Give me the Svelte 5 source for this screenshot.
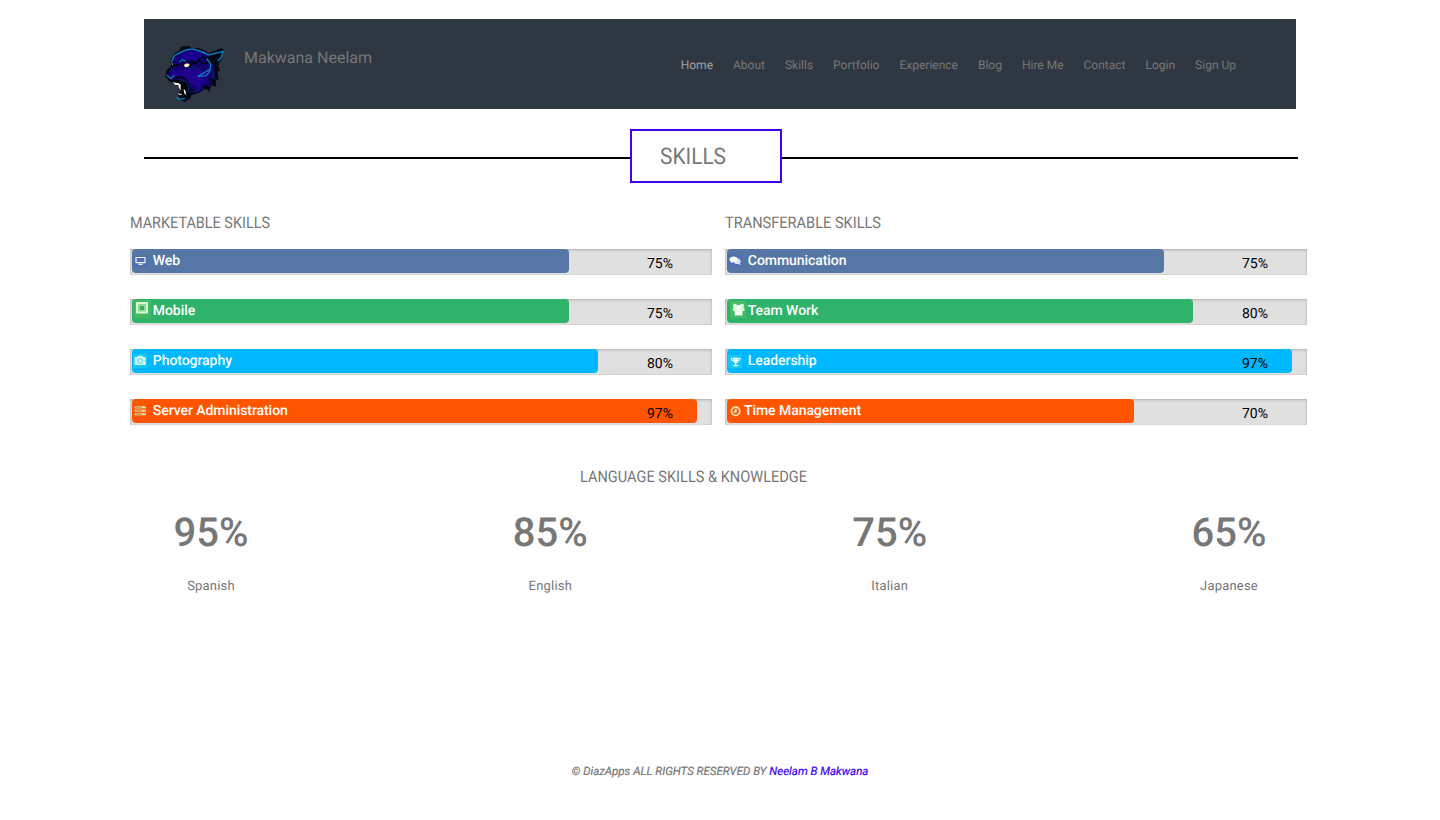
<script>
  const nav = ['Home', 'About', 'Skills', 'Portfolio', 'Experience', 'Blog', 'Hire Me', 'Contact', 'Login', 'Sign Up'];
  const columns = [
    {
      title: 'MARKETABLE SKILLS', width: 140,
      bars: [
        { name: 'Web', icon: 'monitor', value: 75, color: '#5677a5' },
        { name: 'Mobile', icon: 'tablet', value: 75, color: '#2fb269' },
        { name: 'Photography', icon: 'camera', value: 80, color: '#00b8ff' },
        { name: 'Server Administration', icon: 'server', value: 97, color: '#ff5500' }
      ]
    },
    {
      title: 'TRANSFERABLE SKILLS', width: 156,
      bars: [
        { name: 'Communication', icon: 'chat', value: 75, color: '#5677a5' },
        { name: 'Team Work', icon: 'team', value: 80, color: '#2fb269' },
        { name: 'Leadership', icon: 'trophy', value: 97, color: '#00b8ff' },
        { name: 'Time Management', icon: 'clock', value: 70, color: '#ff5500' }
      ]
    }
  ];
  const languages = [['95%', 'Spanish'], ['85%', 'English'], ['75%', 'Italian'], ['65%', 'Japanese']];
</script>

{#snippet heading(text, width, size)}
  <svg class="heading" {width} height={size * 1.5} role="heading" aria-level="2">
    <text x="0" y={size * 1.05} font-size={size} textLength={width} lengthAdjust="spacingAndGlyphs">{text}</text>
  </svg>
{/snippet}

{#snippet icon(name)}
  <svg class="icon" width="20" height="24" viewBox="0 0 20 24">
    {#if name === 'monitor'}
      <rect x="1" y="7" width="15" height="11" fill="#4f6fb0" />
      <path d="M4 8.5h9v5.2H4zM6.5 15.4h4" fill="none" stroke="#e8f2fb" stroke-width="1.2" />
    {:else if name === 'tablet'}
      <rect x="2" y="1" width="17" height="18" fill="#42b965" />
      <rect x="5" y="4" width="10" height="9.5" fill="#8ed995" stroke="#d6f8d5" stroke-width="2" />
      <rect x="8" y="7" width="4" height="4" fill="#3eaa58" />
    {:else if name === 'camera'}
      <rect x="1" y="5" width="14" height="14" fill="#14c6f4" />
      <path d="M2.5 8h2.7l1.2-1.3h3.8L11.4 8h2.3v8H2.5z" fill="#c9fbf3" />
      <circle cx="8.2" cy="12" r="2.3" fill="#e7fff8" stroke="#44cce6" stroke-width="1" />
    {:else if name === 'server'}
      <path d="M2.5 8.2h11.5M2.5 11.7h11.5M2.5 15.2h11.5" stroke="#e7b878" stroke-width="2.6" />
      <path d="M4 8.2h5M4 11.7h5M4 15.2h5" stroke="#b77939" stroke-width=".7" />
      <path d="M10.8 8.2h1.6M10.8 11.7h1.6M10.8 15.2h1.6" stroke="#fff1c2" stroke-width="1.5" />
    {:else if name === 'chat'}
      <rect x="1" y="5" width="14" height="13" fill="#5070b0" />
      <path d="M10 9.2c3-.2 5 3.6 2.8 5l.9 1.8-2.7-1.1c-2 .3-3.2-.3-4-1.2z" fill="#d7e2ff" />
      <path d="M7.2 7.6c-6 0-5.5 4.4-3 5.2L3.5 14l2.4-.8c5.8.5 6.3-5.1 1.3-5.6z" fill="#fff" />
    {:else if name === 'team'}
      <rect x="3" y="2" width="16" height="17" fill="#45bb65" />
      <circle cx="8" cy="6.8" r="2" fill="#dbffdc" /><circle cx="15" cy="6.8" r="2" fill="#dbffdc" />
      <path d="M5.8 9.8q0-1.8 2-1.8h7.6q2 0 2 1.8V12H5.8z" fill="#d4fbd6" />
      <circle cx="11.6" cy="8.3" r="2.5" fill="#f6fff4" /><path d="M7.8 16.5v-4q0-2 3.8-2t3.8 2v4z" fill="#effff0" />
    {:else if name === 'trophy'}
      <rect x="1" y="6" width="14" height="13" fill="#18c5f3" />
      <path d="M6 8.5h5.4v3q-.5 2.6-2 2.8V16h1.8v1.3H6.2V16H8v-1.7Q6.5 14 6 11z" fill="#e5fff5" />
      <path d="M6 9.6H4q0 2.6 3 2.6m4.4-2.6h2q0 2.6-3 2.6" fill="none" stroke="#e5fff5" />
    {:else}
      <circle cx="8.6" cy="12.3" r="4.2" fill="#dc7130" stroke="#ffe3a3" stroke-width="1.6" />
      <path d="M8.8 10v2.7H6.9" fill="none" stroke="#ffeac0" stroke-width="1.4" />
    {/if}
  </svg>
{/snippet}

<div class="page">
  <header>
    <svg class="logo" width="60" height="60" viewBox="60 42 180 180">
      <path d="M64 140l4-19 13-13-1-20 14-20 14-9 2-9 25-3 6 6 27 2 27 13 38-14 6 5-6 29-11 13 6 22-7 1 3 28-9-5 1 23-14-4-4 13-17-1-15 10-24 7-3 11-17 9-19-7 2-15 6-3-10-26-23-9z" fill="#020914" />
      <path d="M70 139l5-17 14-15-1-18 15-20 25-11 31 1 26 9 15 15-13 5 8 7 21 7-7 18 6 28-13 6-5 20-12-5-16 16-20 5-17-4-2-25-16-7-31-5z" fill="#15006f" />
      <path d="M92 104l12-22 24-18 35 2 21 21-20 12-30-3-20-4z" fill="#18008c" />
      <path d="M84 120l40-3 38-2 24 16-1 27-22 15-29-16-19-14-36 4z" fill="#20008c" />
      <path d="M84 104l13 2 17-7M104 91l23 3 35 2-24 7M72 141l16 3 25-4 17 13 5 26 16 2-16 17M179 79l-16 11 16 10 25-2 16 12M178 86l50-10-15 19 12 9M195 153l10-8 10 15M178 168l13 2 6 14" fill="none" stroke="#010613" stroke-width="5" />
      <path d="M82 154l22-5 17 7 9 20-3 20-23 1 5-20z" fill="#01040b" />
      <path d="M86 157l19 3 1 6-12-1zM104 163l6-1v20l-7-12zM119 177l5 4 3 15-7-7zM101 190l14 3-7 3z" fill="#f5f4e6" />
      <path d="M119 105l10-5 8 3-4 7-9 2z" fill="#fff596" />
      <path d="M126 102h3v7h-3z" fill="#fffed0" />
      <path d="M83 99l5 3-4 4z" fill="#c7c88b" />
      <path d="M83 97q4-22 23-28 23-14 44-11l35 12M107 97q5-13 18-3" fill="none" stroke="#0876bd" stroke-width="4.5" />
      <path d="M68 135l13 11 10-10M174 65l19 10 44-11-6 20-10 9M188 85l12 17-1 15-38 22 26-2 11-15M98 202l10 6 14-3" fill="none" stroke="#067dc5" stroke-width="4" />
      <path d="M78 123l14-7M132 116l20-5 16 10M145 184l17-4 10-13M210 126l-6 22M135 188l-4-32-22-8" fill="none" stroke="#00304f" stroke-width="3" />
    </svg>
    <span class="brand">Makwana Neelam</span>
    <nav>
      {#each nav as item, i}<a class:active={i === 0} href="#top">{item}</a>{/each}
    </nav>
  </header>

  <div class="title">
    <div class="box">{@render heading('SKILLS', 66, 23)}</div>
  </div>

  <main>
    {#each columns as column}
      <section>
        {@render heading(column.title, column.width, 16)}
        {#each column.bars as bar}
          <div class="track">
            <div class="fill" style="width:{bar.value}%;background:{bar.color}">
              {@render icon(bar.icon)}<span class:near={bar.icon === 'clock'}>{bar.name}</span>
            </div>
            <b class="value">{bar.value}%</b>
          </div>
        {/each}
      </section>
    {/each}
  </main>

  <div class="lang-title">{@render heading('LANGUAGE SKILLS & KNOWLEDGE', 227, 16)}</div>
  <div class="languages">
    {#each languages as [score, language]}
      <div class="language"><strong>{score}</strong><span>{language}</span></div>
    {/each}
  </div>

  <footer>© DiazApps ALL RIGHTS RESERVED BY <a href="#top">Neelam B Makwana</a></footer>
</div>

<style>
  :global(body) { background: #fff; }
  .page { width: 1440px; height: 820px; box-sizing: border-box; padding-top: 19px; overflow: hidden; font-family: Roboto, sans-serif; color: #777; text-rendering: geometricPrecision; }
  a { color: inherit; text-decoration: none; }
  svg { display: block; flex: none; }
  header { width: 1152px; height: 90px; margin: 0 144px; box-sizing: border-box; padding: 0 60px 0 20px; background: #2f3742; display: flex; }
  .logo { margin-top: 25px; }
  .brand { margin: 27px 0 0 20px; font-size: 16px; line-height: 24px; }
  nav { margin: 36px 0 0 auto; display: flex; gap: 20px; font-size: 12px; line-height: 20px; white-space: nowrap; }
  .active { color: #a0a2a5; }
  .title { width: 1154px; height: 54px; margin: 20px 0 0 144px; display: flex; background: linear-gradient(#000, #000) 0 28px / 100% 2px no-repeat; }
  .box { box-sizing: border-box; width: 152px; height: 54px; margin-left: 486px; padding: 9px 0 0 28px; border: 2px solid #4000f5; background: #fff; }
  .heading { overflow: visible; fill: #777; font-family: Roboto, sans-serif; font-weight: 400; }
  main { display: flex; gap: 13px; margin: 28px 0 0 130px; }
  section { width: 582px; }
  section .heading { margin-bottom: 14px; }
  .track { position: relative; width: 582px; height: 26px; margin-bottom: 24px; background: #e0e0e0; box-shadow: inset 0 1px 3px rgba(0,0,0,.2), inset 0 0 0 1px rgba(0,0,0,.02); }
  .fill { height: 24px; margin-left: 2px; display: flex; border-radius: 4px; color: #fff; font-size: 14px; font-weight: 500; line-height: 24px; letter-spacing: -.06px; white-space: nowrap; overflow: hidden; }
  .fill span { margin-left: .8px; }
  .fill .near { margin-left: -3px; }
  .value { position: absolute; top: 3px; right: 39px; color: #000; font-size: 14px; line-height: 24px; font-weight: 400; }
  .lang-title { margin: 16px 0 0 580px; height: 24px; }
  .languages { display: flex; justify-content: space-between; width: 1094px; margin: 20px 0 0 173px; }
  .language { width: 76px; display: flex; flex-direction: column; align-items: center; }
  strong { font-size: 40px; font-weight: 500; line-height: 48px; }
  .language span { margin-top: 20px; font-size: 13px; line-height: 20px; letter-spacing: .2px; }
  footer { margin-top: 164px; text-align: center; font-size: 11.5px; line-height: 20px; font-style: italic; font-weight: 400; -webkit-text-stroke: .2px; }
  footer a { color: #4000f5; }
</style>
